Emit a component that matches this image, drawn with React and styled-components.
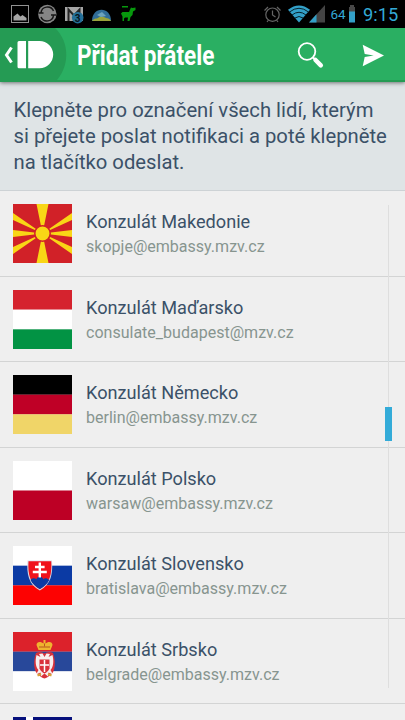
import React from 'react'
import styled, { createGlobalStyle } from 'styled-components'

const GlobalStyle = createGlobalStyle`
  * {
    box-sizing: border-box;
  }
  body {
    margin: 0;
    background-color: #efefef;
    font-family: Roboto, "Noto Sans", sans-serif;
  }
`

const Screen = styled.div`
  width: 405px;
  height: 720px;
  display: flex;
  flex-direction: column;
  position: relative;
  overflow: hidden;
  background-color: #efefef;
`

const StatusBar = styled.div`
  flex: none;
  height: 28px;
  display: flex;
  justify-content: space-between;
  background-color: #000;
`
const StatusIcons = styled.svg`
  display: block;
  height: 28px;
  width: ${({ $width }) => $width}px;
`
const StatusRight = styled.div`
  display: flex;
  align-items: center;
  padding-right: 7px;
  color: #33a9d6;
`
const BatteryLevel = styled.span`
  width: 16px;
  font-size: 13.5px;
  line-height: 30px;
  text-align: center;
`
const Clock = styled.span`
  width: 35px;
  padding-top: 2px;
  font-size: 18.3px;
  line-height: 30px;
  white-space: nowrap;
`

const Header = styled.header`
  flex: none;
  height: 54px;
  display: flex;
  align-items: center;
  position: relative;
  z-index: 1;
  background-color: #2aaf62;
  border-bottom: 2px solid #259b54;
  box-shadow: 0 1px 4px rgba(0, 0, 0, 0.5);
`
const HomeButton = styled.button`
  width: 67px;
  height: 52px;
  padding: 0;
  border: 0;
  background: none;
  svg {
    display: block;
  }
`
const Title = styled.h1`
  flex: 1;
  margin: 0;
  padding: 3px 0 0 10px;
  font-size: 27px;
  font-weight: 700;
  line-height: 52px;
  color: #fff;
  white-space: nowrap;
`
const Narrow = styled.span`
  display: inline-block;
  transform: scaleX(0.835);
  transform-origin: left center;
`
const Action = styled.button`
  flex: none;
  width: 63px;
  height: 52px;
  padding: 0;
  border: 0;
  background: none;
  svg {
    display: block;
  }
`

const Intro = styled.p`
  flex: none;
  height: 109.2px;
  margin: 0;
  padding: 15px 13.5px 0;
  background-color: #dfe4e6;
  border-bottom: 1px solid #cdd2d5;
  font-size: 20.25px;
  line-height: 26px;
  color: #3b5168;
  white-space: nowrap;
`

const List = styled.ul`
  margin: 0;
  padding: 0;
  list-style: none;
`
const Row = styled.li`
  height: 85.5px;
  display: flex;
  gap: 14px;
  padding: 13.2px 13px 0;
  border-bottom: 1px solid #d3d4d4;
`
const FlagBox = styled.svg`
  flex: none;
  display: block;
  width: 59px;
  height: 59px;
`
const Contact = styled.div`
  display: flex;
  flex-direction: column;
  padding-top: 6px;
  white-space: nowrap;
`
const Name = styled.span`
  font-size: 18.15px;
  line-height: 24px;
  color: #3b5168;
`
const Email = styled.span`
  font-size: 16.05px;
  line-height: 26px;
  color: #87958f;
`

const ScrollTrack = styled.div`
  position: absolute;
  top: 205px;
  left: 388px;
  width: 1px;
  height: 483px;
  background-color: #dedede;
`
const ScrollThumb = styled.div`
  position: absolute;
  top: 202px;
  left: -3.5px;
  width: 7px;
  height: 34px;
  background-color: #33abd8;
`

const Stripes = ({ colors }) =>
  colors.map((color, i) => (
    <rect key={i} y={(i * 59) / colors.length} width="59" height={59 / colors.length + 0.1} fill={color} />
  ))

const Macedonia = () => (
  <>
    <rect width="59" height="59" fill="#d12128" />
    <g fill="#f9d616">
      <path d="M23.5 0h12L29.5 29.5zM23.5 59h12L29.5 29.5zM0 26v7l29.500-3.500zM59 26v7l-29.500-3.500z" />
      <path d="M0 9v7l29.500 13.500zM59 9v7l-29.500 13.500zM0 43v7l29.500-20.500zM59 43v7l-29.500-20.500z" />
    </g>
    <circle cx="29.500" cy="29.500" r="7.700" fill="#f9d616" stroke="#d12128" strokeWidth="1.500" />
  </>
)

const Slovakia = () => (
  <>
    <Stripes colors={['#fff', '#0b3aa4', '#fd0202']} />
    <path d="M14.500 14.500h24.500c1 13-1 24-12.200 30C15.500 38.500 13.500 28 14.500 14.500z" fill="#d9d9e6" />
    <path d="M15.500 15.300h22.700c.8 12.500-1 22-11.400 28C17 37.500 14.700 28.500 15.500 15.300z" fill="#f0121c" />
    <path d="M17.500 34c1.500-2 4-2.300 6-.8 1-3.200 5.700-3.200 6.700 0 1.800-1.500 4-1 6 .8-1.800 3.700-5.200 6.900-9.400 8.900-4-2-7.500-5.200-9.300-8.900z" fill="#0b3aa4" />
    <path d="M26.800 16.500v15M22 21h9.600M19.800 26h14" stroke="#fff" strokeWidth="2.400" />
  </>
)

const Serbia = () => (
  <>
    <Stripes colors={['#dc222b', '#28489a', '#fff']} />
    <path d="M23 21c3-2 6-1 8.500.5 2.500-1.500 5.500-2.500 8.500-.5 2 5 2.500 12 1 17-1.500 4.500-5.500 7-9.500 8.500-4-1.500-8-4-9.500-8.500-1.500-5-1-12 1-17z" fill="#d9313a" />
    <path d="M31.500 25l-2-3.500-3.500.5 1.500 3-4-2c-1.500 6-1 12 2 15l-2.500 4.500 4.500-2 .5 4 3.500-3 3.500 3 .5-4 4.500 2-2.500-4.500c3-3 3.500-9 2-15l-4 2 1.500-3-3.500-.5z" fill="#f7efef" />
    <path d="M26.500 27.500h10v9c-1 2.500-3 4-5 5-2-1-4-2.500-5-5z" fill="#d9313a" />
    <path d="M31.500 28v12M27 33h9" stroke="#fff" strokeWidth="1.500" />
    <path d="M25.500 18l-2-5c0-4 5-3.500 7-1.500V8h2v3.500c2-2 7-2.500 7 1.500l-2 5z" fill="#efb52f" />
    <path d="M26 15h11M31.500 11.500v3" stroke="#b9551d" strokeWidth="1" />
    <path d="M24.500 43.500l3.500-1.500M35 42l3.500 1.500" stroke="#d6a138" strokeWidth="2" />
  </>
)

const NavyCross = () => (
  <>
    <rect width="59" height="59" fill="#06107c" />
    <path d="M13 0h7v59h-7zM0 25h59v8H0z" fill="#fff" />
  </>
)

const contacts = [
  { name: 'Konzulát Makedonie', email: 'skopje@embassy.mzv.cz', flag: <Macedonia /> },
  { name: 'Konzulát Maďarsko', email: 'consulate_budapest@mzv.cz', flag: <Stripes colors={['#d5232e', '#fff', '#029344']} /> },
  { name: 'Konzulát Německo', email: 'berlin@embassy.mzv.cz', flag: <Stripes colors={['#000', '#bf0026', '#f0d568']} /> },
  { name: 'Konzulát Polsko', email: 'warsaw@embassy.mzv.cz', flag: <Stripes colors={['#fff', '#bd0025']} /> },
  { name: 'Konzulát Slovensko', email: 'bratislava@embassy.mzv.cz', flag: <Slovakia /> },
  { name: 'Konzulát Srbsko', email: 'belgrade@embassy.mzv.cz', flag: <Serbia /> },
  { name: '', email: '', flag: <NavyCross /> },
]

const Notifications = () => (
  <StatusIcons $width={150} viewBox="0 0 150 28">
    <rect x="11.500" y="5.500" width="17" height="17" fill="none" stroke="#929292" />
    <path d="M13.500 20.500v-4l4-3 3 3 2-1.500 4 3v2.500z" fill="#a5a5a5" />
    <circle cx="47.300" cy="14" r="9.200" fill="#858585" />
    <path d="M41 13c.5-7 10-8 12.500-2M53.500 15c-.5 7-10 8-12.500 2" fill="none" stroke="#171717" strokeWidth="1.500" />
    <path d="M38.500 13h5M51 15h5" stroke="#171717" strokeWidth="1.500" />
    <rect x="65" y="7" width="18" height="14" fill="#a6a6a6" />
    <path d="M68.500 21V9.500l5.500 6 5.500-6V21" fill="none" stroke="#252525" strokeWidth="2" />
    <circle cx="77.700" cy="17.700" r="5.800" fill="#246f98" />
    <text x="77.700" y="21.500" fontSize="10" fontWeight="700" textAnchor="middle" fill="#07151d">3</text>
    <path d="M92 21c0-15 19-15 19 0z" fill="#316d98" />
    <path d="M92 21c2-3 4-2 6-3 3-3 6-1 8 0 2 0 4 1 5 3z" fill="#9aa33b" />
    <path d="M97 15l5-3 4 4-5 1z" fill="#6da4bd" />
    <path d="M122 6h6v1.500h-6zM121 13.500l1.500-1.500h6.500l1.500-3.500.5-1 1.500.5 3-.5v2.500l-2.500 1.500-.5 3.500-2 2-1 4h-2l.5-3.500h-3l-1 1v2.500h-1.500v-4.500z" fill="#07980d" />
  </StatusIcons>
)

const Signals = () => (
  <StatusIcons $width={75} viewBox="256 0 75 28">
    <g fill="none" stroke="#656565" strokeWidth="1.200">
      <circle cx="273.500" cy="14.700" r="6.700" />
      <path d="M273.500 10.500v4.500l3 2M265.500 10.500l3.500-3.500M281.500 10.500l-3.500-3.500M268 22l1.500-2M279 22l-1.500-2" />
    </g>
    <path d="M289 9.700q11-8.500 22 0L300 22.500z" fill="#33a0c8" />
    <g fill="none" stroke="#06202b" strokeWidth="1">
      <path d="M290.500 12q9.500-7.500 19 0M293 15q7-5.500 14 0M296 18q4-3 8 0" />
    </g>
    <path d="M326 5v17.500h-16z" fill="#444" />
    <path d="M317.500 14.300v8.200H310z" fill="#33a0c8" />
  </StatusIcons>
)

const Battery = () => (
  <StatusIcons $width={17} viewBox="347 0 17 28">
    <path d="M351 5h4v2h1v15h-6V7h1z" fill="#484848" />
    <path d="M350 11.500h6V22.500h-6z" fill="#33a0c8" />
  </StatusIcons>
)

function App() {
  return (
    <Screen>
      <GlobalStyle />
      <StatusBar>
        <Notifications />
        <StatusRight>
          <Signals />
          <BatteryLevel>64</BatteryLevel>
          <Battery />
          <Clock>9:15</Clock>
        </StatusRight>
      </StatusBar>
      <Header>
        <HomeButton aria-label="Zpět">
          <svg width="67" height="54" viewBox="0 0 67 54">
            <path d="M0 0h55C70 14 70 39 55 54H0z" fill="#259b54" />
            <path d="M11.500 19.500L6.500 27l5 7.500" fill="none" stroke="#fff" strokeWidth="3" />
            <path d="M19 13h7v27.200h-7q-1.500 0-1.500-1.500v-24.200q0-1.500 1.500-1.500zM28.200 13H39.500a13.700 13.600 0 0 1 0 27.200H28.200z" fill="#fff" />
          </svg>
        </HomeButton>
        <Title><Narrow>Přidat přátele</Narrow></Title>
        <Action aria-label="Hledat">
          <svg width="63" height="52" viewBox="279 28 63 52">
            <circle cx="307" cy="51.500" r="8.300" fill="none" stroke="#fff" strokeWidth="1.800" />
            <path d="M313 57.500l2.500 2.500" stroke="#fff" strokeWidth="2" />
            <path d="M315.500 60l5.300 5.300" stroke="#fff" strokeWidth="4.500" strokeLinecap="round" />
          </svg>
        </Action>
        <Action aria-label="Odeslat">
          <svg width="63" height="52" viewBox="342 28 63 52">
            <path d="M362.700 44.700L384 55.400l-21.300 10.800 2-9.200 9-1.500-9-1.500z" fill="#fff" />
          </svg>
        </Action>
      </Header>
      <Intro>
        Klepněte pro označení všech lidí, kterým<br />
        si přejete poslat notifikaci a poté klepněte<br />
        na tlačítko odeslat.
      </Intro>
      <List>
        {contacts.map(({ name, email, flag }, i) => (
          <Row key={i}>
            <FlagBox viewBox="0 0 59 59">{flag}</FlagBox>
            <Contact>
              <Name>{name}</Name>
              <Email>{email}</Email>
            </Contact>
          </Row>
        ))}
      </List>
      <ScrollTrack>
        <ScrollThumb />
      </ScrollTrack>
    </Screen>
  )
}

export default App
